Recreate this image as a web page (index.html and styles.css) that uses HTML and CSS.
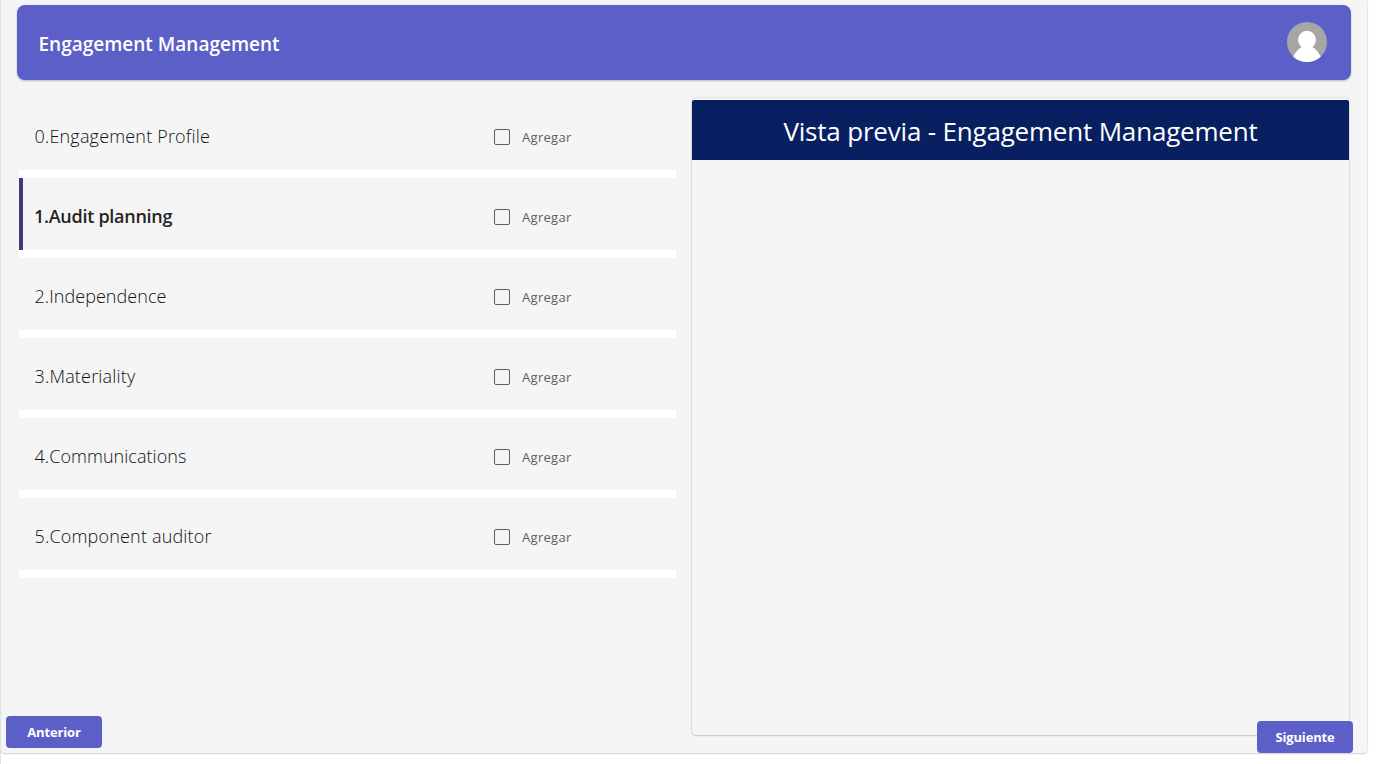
FILE: index.html
```html
<!DOCTYPE html>
<html lang="es">
<head>
<meta charset="utf-8">
<title>Engagement Management</title>
<link rel="stylesheet" href="styles.css">
</head>
<body>
<main class="panel">
  <header class="topbar">
    <h1 class="topbar-title">Engagement Management</h1>
    <svg class="avatar" viewBox="0 0 40 40" aria-hidden="true">
      <defs><clipPath id="disc"><circle cx="20" cy="20" r="20"/></clipPath></defs>
      <g clip-path="url(#disc)">
        <rect width="40" height="40" fill="#a6a6a6"/>
        <circle cx="20" cy="17.8" r="9" fill="#fff"/>
        <path d="M5 38C7 31 12 26 16 24.5H24C28 26 33 31 35 38V42H5Z" fill="#fff"/>
      </g>
    </svg>
  </header>
  <div class="columns">
    <ul class="list">
      <li class="row"><span class="name">0.Engagement Profile</span><label class="check"><span class="box"></span><span class="add">Agregar</span></label></li>
      <li class="row active"><span class="name">1.Audit planning</span><label class="check"><span class="box"></span><span class="add">Agregar</span></label></li>
      <li class="row"><span class="name tight">2.Independence</span><label class="check"><span class="box"></span><span class="add">Agregar</span></label></li>
      <li class="row"><span class="name">3.Materiality</span><label class="check"><span class="box"></span><span class="add">Agregar</span></label></li>
      <li class="row"><span class="name tight">4.Communications</span><label class="check"><span class="box"></span><span class="add">Agregar</span></label></li>
      <li class="row"><span class="name">5.Component auditor</span><label class="check"><span class="box"></span><span class="add">Agregar</span></label></li>
    </ul>
    <section class="preview">
      <h2 class="preview-title">Vista previa - Engagement Management</h2>
    </section>
  </div>
  <button class="btn prev">Anterior</button>
  <button class="btn next">Siguiente</button>
</main>
</body>
</html>
```
FILE: styles.css
```css
* { box-sizing: border-box; }
body {
  margin: 0;
  height: 764px;
  overflow: hidden;
  border-left: 1px solid #e1e1e1;
  background: #fff;
  font-family: "Segoe UI", "Open Sans", "Noto Sans", sans-serif;
  color: #252423;
}
.panel {
  position: relative;
  width: 1366px;
  height: 753px;
  padding: 5px 16px 0;
  background: #f5f5f5;
  border-radius: 0 0 4px 4px;
  box-shadow: 0 0 1px 1px rgba(0,0,0,.07), 0 1px 2px rgba(0,0,0,.12);
}
.topbar {
  display: flex;
  align-items: center;
  justify-content: space-between;
  height: 75px;
  padding: 0 24px 0 21.5px;
  background: #5b5fc7;
  border-radius: 8px;
  box-shadow: 0 1px 2px rgba(0,0,0,.25);
}
.topbar-title {
  margin: 0;
  padding-top: 3px;
  font-size: 19px;
  line-height: 24px;
  font-weight: 600;
  color: #fff;
}
.avatar { width: 40px; height: 40px; margin-bottom: 1px; }
.columns {
  display: grid;
  grid-template-columns: 657px 657px;
  gap: 16px;
  padding: 18px 2px 0;
}
.list { margin: 0; padding: 0; list-style: none; }
.row {
  display: flex;
  align-items: center;
  height: 72px;
  margin-bottom: 8px;
  padding-left: 15.5px;
  box-shadow: 0 8px 0 #fff;
}
.row.active {
  padding-left: 11px;
  border-left: 4px solid #3d3e78;
}
.name {
  width: 459.5px;
  margin-top: 4px;
  font-size: 18px;
  line-height: 24px;
  font-weight: 300;
  letter-spacing: .18px;
  color: #111;
  white-space: nowrap;
}
.name.tight { letter-spacing: .05px; }
.active .name { width: 460px; font-weight: 600; letter-spacing: -.27px; color: #252423; }
.check { display: flex; align-items: center; gap: 12px; margin-top: 6px; }
.box { width: 16px; height: 16px; border: 1px solid #605e5c; border-radius: 2px; }
.add { font-size: 13px; line-height: 20px; letter-spacing: .3px; color: #616161; }
.preview {
  height: 637px;
  padding-top: 2px;
  border-radius: 4px;
  box-shadow: 0 0 1px 1px rgba(0,0,0,.07), 0 1px 2px rgba(0,0,0,.14);
}
.preview-title {
  height: 60px;
  margin: 0;
  background: #082062;
  border-radius: 2px 2px 0 0;
  color: #fff;
  text-align: center;
  font-size: 26px;
  font-weight: 400;
  line-height: 62px;
  letter-spacing: -.19px;
}
.btn {
  position: absolute;
  width: 96px;
  height: 32px;
  padding: 0;
  border: 0;
  border-radius: 4px;
  background: #5b5fc7;
  color: #fff;
  font: 700 13px/20px "Segoe UI", "Open Sans", "Noto Sans", sans-serif;
  letter-spacing: -.15px;
}
.prev { left: 5px; top: 716px; }
.next { left: 1256px; top: 721px; }
```
